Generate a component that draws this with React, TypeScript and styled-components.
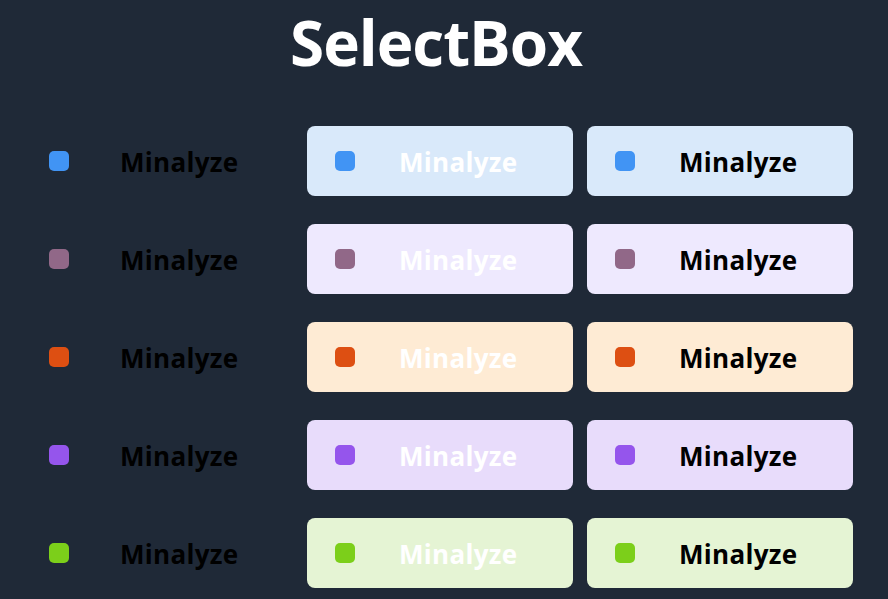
import React from "react";
import styled, { createGlobalStyle } from "styled-components";

const Global = createGlobalStyle`
  html, body { margin: 0; padding: 0; background: #1f2937; }
  body { font-family: "Open Sans", "Noto Sans", sans-serif; }
`;

const Page = styled.div`
  width: 888px;
  height: 599px;
  overflow: hidden;
  background: #1f2937;
  display: flex;
  flex-direction: column;
  align-items: center;
`;

const Header = styled.header`
  height: 126px;
  display: flex;
  align-items: flex-start;
  justify-content: center;
  margin-right: 16px;
`;

const Title = styled.h1`
  margin: 0;
  font-size: 62px;
  font-weight: 700;
  color: #ffffff;
  line-height: 84px;
  letter-spacing: -1px;
`;

const Grid = styled.div`
  display: grid;
  grid-template-columns: 266px 266px 266px;
  column-gap: 14px;
  row-gap: 28px;
  margin-left: -8px;
`;

const Box = styled.div<{ $bg?: string; $plain?: boolean }>`
  height: 70px;
  border-radius: 8px;
  background: ${(p) => p.$bg ?? "transparent"};
  display: flex;
  align-items: center;
  padding-left: ${(p) => (p.$plain ? "22px" : "28px")};
`;

const Swatch = styled.span<{ $color: string }>`
  width: 20px;
  height: 20px;
  border-radius: 5px;
  background: ${(p) => p.$color};
  flex: none;
`;

const Label = styled.span<{ $color: string; $plain?: boolean }>`
  margin-left: ${(p) => (p.$plain ? "51px" : "44px")};
  font-size: 26px;
  font-weight: 700;
  color: ${(p) => p.$color};
  letter-spacing: 0.3px;
  padding-top: 2px;
`;

const rows = [
  { sq: "#4194f4", bg: "#d9e9fa" },
  { sq: "#916888", bg: "#eee9fe" },
  { sq: "#dd4f12", bg: "#feebd4" },
  { sq: "#9555ec", bg: "#e8dcfb" },
  { sq: "#7ccf1a", bg: "#e5f4d4" },
];

export default function App() {
  return (
    <Page>
      <Global />
      <Header>
        <Title>SelectBox</Title>
      </Header>
      <Grid>
        {rows.map((r, i) => (
          <React.Fragment key={i}>
            <Box $plain>
              <Swatch $color={r.sq} />
              <Label $color="#000000" $plain>Minalyze</Label>
            </Box>
            <Box $bg={r.bg}>
              <Swatch $color={r.sq} />
              <Label $color="#ffffff">Minalyze</Label>
            </Box>
            <Box $bg={r.bg}>
              <Swatch $color={r.sq} />
              <Label $color="#000000">Minalyze</Label>
            </Box>
          </React.Fragment>
        ))}
      </Grid>
    </Page>
  );
}
